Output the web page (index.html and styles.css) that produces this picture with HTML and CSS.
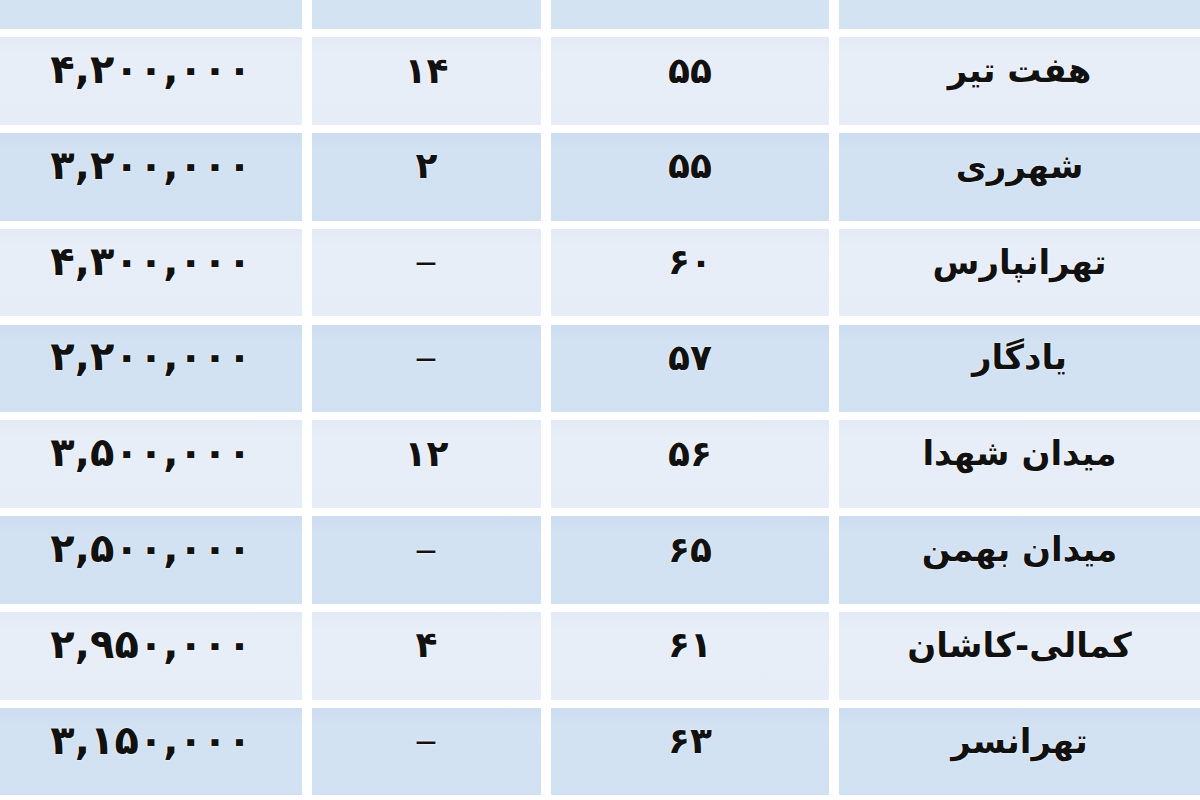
FILE: index.html
```html
<!DOCTYPE html>
<html lang="fa" dir="rtl">
<head>
<meta charset="utf-8">
<title>قیمت آپارتمان</title>
<link rel="stylesheet" href="styles.css">
</head>
<body>
<div class="table">
  <div class="cell head">محله</div>
  <div class="cell head">متراژ</div>
  <div class="cell head">عمر بنا</div>
  <div class="cell head">قیمت هر متر</div>

  <div class="cell light">هفت تیر</div>
  <div class="cell light num">۵۵</div>
  <div class="cell light num">۱۴</div>
  <div class="cell light num price">۴,۲۰۰,۰۰۰</div>

  <div class="cell dark">شهرری</div>
  <div class="cell dark num">۵۵</div>
  <div class="cell dark num">۲</div>
  <div class="cell dark num price">۳,۲۰۰,۰۰۰</div>

  <div class="cell light">تهرانپارس</div>
  <div class="cell light num">۶۰</div>
  <div class="cell light num"><span class="dash">–</span></div>
  <div class="cell light num price">۴,۳۰۰,۰۰۰</div>

  <div class="cell dark">یادگار</div>
  <div class="cell dark num">۵۷</div>
  <div class="cell dark num"><span class="dash">–</span></div>
  <div class="cell dark num price">۲,۲۰۰,۰۰۰</div>

  <div class="cell light">میدان شهدا</div>
  <div class="cell light num">۵۶</div>
  <div class="cell light num">۱۲</div>
  <div class="cell light num price">۳,۵۰۰,۰۰۰</div>

  <div class="cell dark">میدان بهمن</div>
  <div class="cell dark num">۶۵</div>
  <div class="cell dark num"><span class="dash">–</span></div>
  <div class="cell dark num price">۲,۵۰۰,۰۰۰</div>

  <div class="cell light">کمالی-کاشان</div>
  <div class="cell light num">۶۱</div>
  <div class="cell light num">۴</div>
  <div class="cell light num price">۲,۹۵۰,۰۰۰</div>

  <div class="cell dark">تهرانسر</div>
  <div class="cell dark num">۶۳</div>
  <div class="cell dark num"><span class="dash">–</span></div>
  <div class="cell dark num price">۳,۱۵۰,۰۰۰</div>
</div>
</body>
</html>
```

FILE: styles.css
```css
html, body {
  margin: 0;
  padding: 0;
  background: #ffffff;
  overflow: hidden;
}

body {
  width: 1200px;
  height: 800px;
  font-family: "DejaVu Sans", "Noto Sans", sans-serif;
}

.table {
  display: grid;
  grid-template-columns: 361px 278px 229px 302px;
  grid-template-rows: 80px repeat(8, 87.5px);
  column-gap: 10px;
  row-gap: 8.3px;
  margin-top: -51px;
}

.cell {
  display: flex;
  align-items: center;
  justify-content: center;
  padding-bottom: 22px;
  box-sizing: border-box;
  font-weight: bold;
  font-size: 34px;
  color: #111111;
  text-shadow: 0 0 2px #ffffff, 0 0 1px #ffffff;
}

.head {
  background: #d3e3f2;
  color: #ffffff;
  text-shadow: none;
  padding-bottom: 40px;
}

.light {
  background: linear-gradient(180deg, #e2eaf5 0%, #e8eef7 20%, #e7edf6 100%);
}

.dark {
  background: linear-gradient(180deg, #cddcf0 0%, #d2e2f2 20%, #d1e1f1 100%);
}

.num {
  font-size: 36px;
  letter-spacing: 1px;
}

.price {
  font-size: 40px;
  padding-bottom: 24px;
}

.dash {
  display: inline-block;
  font-weight: normal;
  transform: scaleX(1.3);
}
```
